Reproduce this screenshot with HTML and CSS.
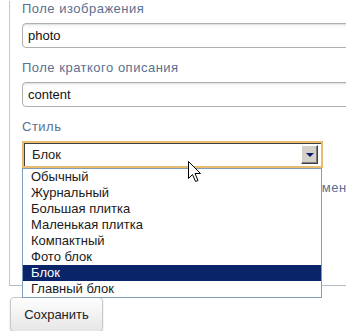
FILE: index.html
```
<!DOCTYPE html>
<html lang="ru">

<head>
    <meta charset="UTF-8" />
    <meta name="viewport" content="width=device-width, initial-scale=1.0" />
    <title>Настройки блока</title>
    <link rel="stylesheet" href="styles.css">
</head>

<body>
    <div class="page">
        <div class="fieldset">
            <div class="field">
                <div class="label">Поле изображения</div>
                <div class="input">photo</div>
            </div>
            <div class="field">
                <div class="label">Поле краткого описания</div>
                <div class="input">content</div>
            </div>
            <div class="field style-field">
                <div class="label">Стиль</div>
                <div class="select">
                    <span class="select-value">Блок</span>
                    <span class="select-arrow"></span>
                </div>
                <ul class="options">
                    <li>Обычный</li>
                    <li>Журнальный</li>
                    <li>Большая плитка</li>
                    <li>Маленькая плитка</li>
                    <li>Компактный</li>
                    <li>Фото блок</li>
                    <li class="selected">Блок</li>
                    <li>Главный блок</li>
                </ul>
            </div>
            <div class="field last">
                <div class="label">Показывать на этой странице список всех элементов</div>
            </div>
        </div>
        <button class="save">Сохранить</button>

        <svg class="cursor" width="13" height="22" viewBox="0 0 13 22">
            <path d="M0.5 0.5 L0.5 17.5 L4.5 13.5 L7.5 20.5 L10 19.5 L7 12.5 L12.5 12.5 Z" fill="#fff" stroke="#000" stroke-width="1" />
        </svg>
    </div>
</body>

</html>
```

FILE: styles.css
```
* {
    padding: 0;
    margin: 0;
    box-sizing: border-box;
}

body {
    background-color: #fff;
    font-family: 'Liberation Sans', Arial, sans-serif;
    font-size: 13px;
    overflow: hidden;
}

.page {
    position: relative;
    width: 420px;
    padding-top: 1px;
}

.fieldset {
    margin-left: 9px;
    padding-left: 12px;
    padding-bottom: 83px;
    border-left: 1px solid #c4c8cc;
    border-bottom: 1px solid #b4bcc4;
}

.field {
    margin-bottom: 12px;
}

.field.last {
    margin-bottom: 0;
}

.label {
    color: #5a7090;
    line-height: 16px;
    letter-spacing: 0.5px;
    margin-bottom: 6px;
    white-space: nowrap;
}

.input {
    width: 360px;
    height: 25px;
    line-height: 23px;
    padding-left: 5px;
    color: #111;
    border: 1px solid #b0b0b0;
    border-radius: 4px;
    background: linear-gradient(#f4f4f4, #fff 5px);
    box-shadow: inset 0 1px 1px rgba(0, 0, 0, 0.08);
}

.style-field {
    position: relative;
}

.select {
    display: flex;
    align-items: center;
    justify-content: space-between;
    width: 301px;
    height: 27px;
    padding: 0 3px 0 8px;
    border: 2px solid #e9bd70;
    background: #fff;
    box-shadow: inset 1px 1px 0 #404040;
    color: #222;
}

.select-arrow {
    position: relative;
    width: 17px;
    height: 19px;
    background: #d4d0c8;
    border: 1px solid;
    border-color: #fff #404040 #404040 #fff;
    box-shadow: inset -1px -1px 0 #808080;
}

.select-arrow::after {
    content: '';
    position: absolute;
    left: 4px;
    top: 7px;
    border-left: 4px solid transparent;
    border-right: 4px solid transparent;
    border-top: 4px solid #0a1a6a;
}

.options {
    position: absolute;
    left: 0;
    top: 49px;
    width: 300px;
    list-style: none;
    background: #fff;
    border: 1px solid #7f9db9;
    z-index: 2;
}

.options li {
    height: 16px;
    line-height: 16px;
    padding-left: 8px;
    color: #1a1a1a;
}

.options li.selected {
    background: #0a246a;
    color: #fff;
}

.save {
    margin: 11px 0 0 10px;
    width: 93px;
    height: 35px;
    font-family: 'Liberation Sans', Arial, sans-serif;
    font-size: 13px;
    color: #222;
    border: 1px solid #c8c8c8;
    border-radius: 4px;
    background: linear-gradient(#fefefe, #e6e6e6);
    box-shadow: 0 1px 2px rgba(0, 0, 0, 0.15);
}

.cursor {
    position: absolute;
    left: 188px;
    top: 161px;
    z-index: 3;
}
```
